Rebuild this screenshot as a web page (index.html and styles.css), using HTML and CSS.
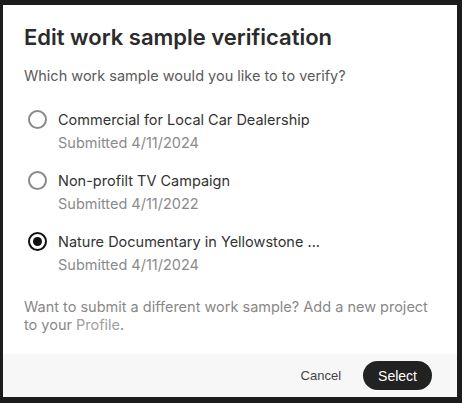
FILE: index.html
```html
<!DOCTYPE html>
<html>
<head>
<meta charset="utf-8">
<link rel="stylesheet" href="styles.css">
</head>
<body>
<div class="modal">
  <div class="content">
    <h1 class="title">Edit work sample verification</h1>
    <p class="question">Which work sample would you like to to verify?</p>
    <div class="options">
      <label class="option">
        <span class="radio"></span>
        <span class="texts">
          <span class="name">Commercial for Local Car Dealership</span>
          <span class="date">Submitted 4/11/2024</span>
        </span>
      </label>
      <label class="option">
        <span class="radio"></span>
        <span class="texts">
          <span class="name">Non-profilt TV Campaign</span>
          <span class="date">Submitted 4/11/2022</span>
        </span>
      </label>
      <label class="option">
        <span class="radio checked"></span>
        <span class="texts">
          <span class="name">Nature Documentary in Yellowstone ...</span>
          <span class="date">Submitted 4/11/2024</span>
        </span>
      </label>
    </div>
    <p class="note">Want to submit a different work sample? Add a new project to your <a class="link" href="#">Profile</a>.</p>
  </div>
  <div class="footer">
    <button class="btn cancel">Cancel</button>
    <button class="btn select">Select</button>
  </div>
</div>
</body>
</html>
```
FILE: styles.css
```css
* { box-sizing: border-box; }
html, body { margin: 0; padding: 0; }
body {
  background: #1c1c1c;
  width: 462px;
  height: 403px;
  padding: 5px 5px 6px 3px;
  font-family: Inter, "Noto Sans", sans-serif;
}
.modal {
  background: #ffffff;
  width: 454px;
  height: 392px;
  display: flex;
  flex-direction: column;
}
.content {
  flex: 1;
  padding: 17px 21px 0 21px;
}
.title {
  margin: 0;
  font-size: 22px;
  line-height: 30px;
  font-weight: 600;
  color: #2b2b2b;
}
.question {
  margin: 14px 0 0;
  font-size: 14.5px;
  line-height: 20px;
  color: #5a5a5a;
}
.options {
  margin-top: 24px;
  display: flex;
  flex-direction: column;
  gap: 18px;
}
.option {
  display: flex;
  align-items: flex-start;
  gap: 11px;
}
.radio {
  width: 19px;
  height: 19px;
  border-radius: 50%;
  border: 2px solid #8a8a8a;
  margin-top: 0;
  margin-left: 4px;
  flex: none;
  display: flex;
  align-items: center;
  justify-content: center;
}
.radio.checked {
  border-color: #111;
}
.radio.checked::after {
  content: "";
  width: 9px;
  height: 9px;
  border-radius: 50%;
  background: #111;
}
.texts {
  display: flex;
  flex-direction: column;
  gap: 2px;
}
.name {
  font-size: 14.5px;
  line-height: 20px;
  color: #333;
}
.date {
  font-size: 14.5px;
  line-height: 21px;
  color: #8a8a8a;
}
.note {
  margin: 23px 0 0;
  font-size: 14.5px;
  line-height: 18px;
  color: #888;
}
.link {
  color: #a0a0a0;
  text-decoration: none;
}
.footer {
  height: 43px;
  background: #f7f7f7;
  display: flex;
  align-items: center;
  justify-content: flex-end;
  padding: 0 25px 0 0;
  gap: 22px;
}
.btn {
  font-family: "Liberation Sans", Arial, sans-serif;
  font-size: 13px;
  border: 0;
  border-radius: 15px;
  height: 29px;
  padding: 0;
  cursor: pointer;
}
.cancel {
  background: transparent;
  color: #444;
}
.select {
  background: #222;
  color: #fff;
  padding: 0 15px;
  font-size: 14px;
}
```
